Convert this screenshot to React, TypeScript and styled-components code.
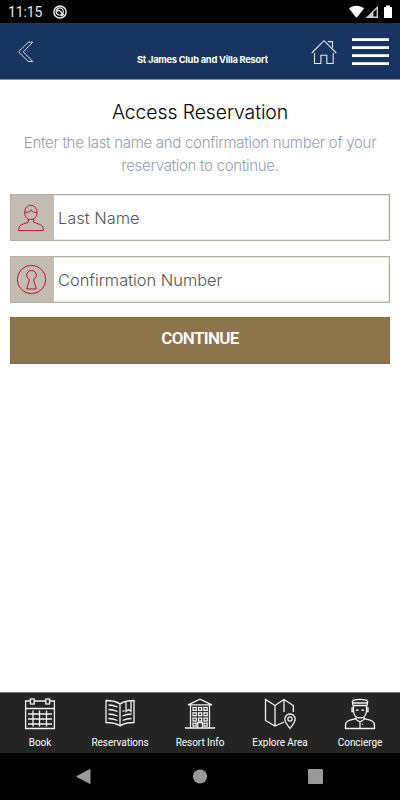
import React from "react";
import styled, { createGlobalStyle } from "styled-components";

const Global = createGlobalStyle`
  * { box-sizing: border-box; }
  body { margin: 0; background: #fff; font-family: Inter, "Open Sans", sans-serif; }
  svg { display: block; flex: none; overflow: visible; }
`;

const Screen = styled.div`
  width: 400px;
  height: 800px;
  display: flex;
  flex-direction: column;
  overflow: hidden;
  background: #fff;
`;

const StatusBar = styled.div`
  height: 23px;
  background: #000;
  display: flex;
  align-items: center;
  padding: 0 7px 0 8px;
`;

const Clock = styled.span`
  font: 400 14px/23px Roboto, sans-serif;
  letter-spacing: -0.1px;
  color: #e8e8e8;
  width: 45px;
  padding-top: 1px;
`;

const StatusIcons = styled.div`
  margin-left: auto;
`;

const Header = styled.header`
  height: 57px;
  background: #183561;
  border-bottom: 1px solid #8b98ac;
  display: grid;
  grid-template-columns: 52px 1fr 41px 37px;
  align-items: start;
  padding: 0 11px 0 17px;
`;

const HeaderTitle = styled.h1`
  margin: 0 0 0 68px;
  padding-top: 29px;
  font-size: 9.3px;
  line-height: 16px;
  font-weight: 700;
  letter-spacing: -0.25px;
  white-space: nowrap;
  color: #fff;
`;

const IconSlot = styled.div<{ $top: number }>`
  padding-top: ${(p) => p.$top}px;
`;

const MenuLines = styled.div`
  display: grid;
  gap: 5px;
  margin-top: 15px;
`;

const MenuLine = styled.span`
  height: 3px;
  background: linear-gradient(#d4d8df 0 1px, #fff 1px);
`;

const Main = styled.main`
  flex: 1;
  padding: 19px 10px 0;
`;

const Heading = styled.h2`
  margin: 0;
  text-align: center;
  font-size: 19.4px;
  line-height: 26px;
  font-weight: 300;
  letter-spacing: -0.08px;
  color: #000;
`;

const Intro = styled.p`
  margin: 6px 0 17px;
  text-align: center;
  font-size: 15px;
  line-height: 23px;
  font-weight: 300;
  letter-spacing: -0.29px;
  color: #94a0ae;
  white-space: nowrap;
`;

const Field = styled.label`
  display: flex;
  height: 47px;
  margin-bottom: 15px;
  border: 1px solid #b9ada0;
  box-shadow: inset 0 0 0 0.5px #d5cec5;
  background: #fff;

  & + & {
    margin-bottom: 14px;
  }
`;

const FieldIcon = styled.span`
  width: 43px;
  background: #c3bcb0;
  display: flex;
  align-items: center;
  justify-content: center;
`;

const FieldText = styled.span`
  padding-left: 4px;
  font-size: 16.4px;
  line-height: 46px;
  font-weight: 300;
  color: #555;
`;

const Submit = styled.button`
  display: block;
  width: 100%;
  height: 47px;
  padding: 0 0 5px;
  border: 1px solid #876b3a;
  background: #8d744a;
  color: #fff;
  font: 600 17px/20px Roboto, sans-serif;
  letter-spacing: -0.65px;
`;

const TabBar = styled.nav`
  height: 61px;
  background: #252525;
  border-top: 1px solid #777;
  display: grid;
  grid-template-columns: repeat(5, 80px);
`;

const Tab = styled.div`
  display: flex;
  flex-direction: column;
  align-items: center;
  padding-top: 5px;
  gap: 5px;
  font: 400 10px/16px Roboto, sans-serif;
  letter-spacing: -0.05px;
  color: #fff;
  white-space: nowrap;
`;

const SystemNav = styled.div`
  height: 47px;
  background: #000;
  display: flex;
  align-items: flex-start;
  justify-content: space-between;
  padding: 16px 77px 0 76px;
`;

const lineIcon = {
  width: 32,
  height: 32,
  viewBox: "0 0 32 32",
  fill: "none",
  stroke: "#f2f2f2",
  strokeWidth: 1.3,
} as const;

const CalendarIcon = () => (
  <svg {...lineIcon}>
    <path d="M6.4 3H1.6v27.5h28.8V3h-4.8M10.2 3h11.6M1.6 10.5h28.8" />
    <rect x="6.4" y="1" width="3.8" height="5" />
    <rect x="21.8" y="1" width="3.8" height="5" />
    <path d="M4 16h24M4 21h24M4 26h24M9 12.5V28.5M15.5 12.5V28.5M22.5 12.5V28.5" />
  </svg>
);

const BookIcon = () => (
  <svg {...lineIcon}>
    <path d="M16 6C12 3 7 2.5 2 2.5v22c5 0 10 .3 14 3.5 4-3.2 9-3.5 14-3.5v-22C25 2.5 20 3 16 6zV28" />
    <path d="M4.5 7c3 0 6 .7 9 2M4.5 11.5c3 0 6 .7 9 2M4.5 16c3 0 6 .7 9 2M4.5 20.5c3 0 6 .7 9 2M18.5 18c2.5-1.2 5.5-2 9-2M18.5 22.5c2.5-1.2 5.5-2 9-2M18.5 13.5l2-.8M22 3.5v10l2.5-2 2.5 2v-11" />
  </svg>
);

const HotelIcon = () => (
  <svg {...lineIcon}>
    <path d="M4 6.8L16 1.2l12 5.6M4 6.8h24M6.500 7v22.500M25.500 7v22.500M1 30h30" />
    {[9.5, 14.8, 20.1, 25.2].map((y, row) =>
      [9, 14.5, 20].map((x, col) =>
        row === 3 && col === 1 ? (
          <path key={`${x}-${y}`} d="M13.8 30v-5.5h4.6V30" />
        ) : (
          <rect key={`${x}-${y}`} x={x} y={y} width="3.2" height="2.9" />
        )
      )
    )}
  </svg>
);

const MapIcon = () => (
  <svg {...lineIcon}>
    <path d="M20 24l-9 4-9.5-5.5V1.5L11 7.5l9-6 9.3 6V14M11 7.5V28M20 1.5v12.5" />
    <path d="M26 30.5c-3-4.5-5.2-6.3-5.2-9.3a5.2 5.2 0 0 1 10.4 0c0 3-2.2 4.8-5.2 9.3z" />
    <circle cx="26" cy="21" r="2.1" />
  </svg>
);

const ConciergeIcon = () => (
  <svg {...lineIcon}>
    <path d="M9 7.5L8.3 3.5C10 .7 22 .7 23.7 3.5L23 7.5zM9 5h14" />
    <path d="M9.5 7.5v5c0 5 3 7.5 6.5 7.5s6.5-2.5 6.5-7.5v-5M9.5 10H8v3.5h1.5M22.5 10H24v3.5h-1.5M12 12.5q1.2-1 2.5 0M17.5 12.5q1.2-1 2.5 0" />
    <path d="M12 18.5v3l4 2.5 4-2.5v-3M12 20.5c-6 1.5-10.5 1.8-10.5 7v3h29v-3c0-5.2-4.5-5.5-10.5-7M16 24v6.5M18.5 25.8v1" />
  </svg>
);

const tabs = [
  { label: "Book", Icon: CalendarIcon },
  { label: "Reservations", Icon: BookIcon },
  { label: "Resort Info", Icon: HotelIcon },
  { label: "Explore Area", Icon: MapIcon },
  { label: "Concierge", Icon: ConciergeIcon },
];

export default function App() {
  return (
    <>
      <Global />
      <Screen>
        <StatusBar>
          <Clock>11:15</Clock>
          <svg width="14" height="14" viewBox="0 0 14 14" fill="none" stroke="#e8e8e8">
            <circle cx="7" cy="7" r="6.1" strokeWidth="1.5" />
            <circle cx="6.7" cy="6.5" r="3.6" strokeWidth="1.3" />
            <path d="M3.7 6.3c2-2 3.2-.9 6.5 3.3L8 11" strokeWidth="1.6" />
          </svg>
          <StatusIcons>
            <svg width="44" height="14" viewBox="0 0 44 14" fill="#fff">
              <path d="M0 3.6C4-.2 11-.2 15 3.6L7.5 13z" />
              <path d="M29 .8V13H16.5z" fill="#ccc" />
              <path d="M27.6 4v7.6h-3.2V7.3z" fill="#000" />
              <path d="M35 2h2V.5h4V2h2v11h-8z" />
            </svg>
          </StatusIcons>
        </StatusBar>
        <Header>
          <IconSlot $top={18}>
            <svg width="18" height="22" viewBox="0 0 18 22" fill="none" stroke="#d7dce5" strokeWidth="1">
              <path d="M1.5 10.8L11.3 1.2h4.5L6.2 10.8l9.6 9.7h-4.5z" />
            </svg>
          </IconSlot>
          <HeaderTitle>St James Club and Villa Resort</HeaderTitle>
          <IconSlot $top={16}>
            <svg width="26" height="26" viewBox="0 0 26 26" fill="none" stroke="#e2e5eb" strokeWidth="1.1">
              <path d="M.7 14L13 1.7 25.3 14M3.5 13.8v10.7h6.4v-8.2h5.9v8.2h6.4V13.8M16.7 2.6h4.8v6.2" />
            </svg>
          </IconSlot>
          <MenuLines>
            <MenuLine />
            <MenuLine />
            <MenuLine />
            <MenuLine />
          </MenuLines>
        </Header>
        <Main>
          <Heading>Access Reservation</Heading>
          <Intro>
            Enter the last name and confirmation number of your
            <br />
            reservation to continue.
          </Intro>
          <Field>
            <FieldIcon>
              <svg width="29" height="27" viewBox="0 0 29 27" fill="none" stroke="#c80f2e" strokeWidth="1">
                <path d="M6.7 8.500C6.700 4 9.200 1.300 12.800 1.300S19 4 19 8.500s-2.600 7-6.200 7-6.100-2.500-6.100-7zM7 8.200c2.400.4 4.500 0 6.300-2.200 1.200 2 2.500 2.600 5.500 2.400" />
                <path d="M10.300 15v3.200c-4 2-9.500 1.800-9.500 6.800v1.600h24.400V25c0-5-5.500-4.800-9.500-6.800V15" />
              </svg>
            </FieldIcon>
            <FieldText>Last Name</FieldText>
          </Field>
          <Field>
            <FieldIcon>
              <svg width="31" height="30" viewBox="0 0 31 30" fill="none" stroke="#c80f2e" strokeWidth="1">
                <circle cx="14.5" cy="14.5" r="14.2" />
                <path d="M12.4 14.5a4.8 4.8 0 1 1 4.2 0l2.6 9.4h-9.4z" />
              </svg>
            </FieldIcon>
            <FieldText>Confirmation Number</FieldText>
          </Field>
          <Submit>CONTINUE</Submit>
        </Main>
        <TabBar>
          {tabs.map(({ label, Icon }) => (
            <Tab key={label}>
              <Icon />
              {label}
            </Tab>
          ))}
        </TabBar>
        <SystemNav>
          <svg width="15" height="15" viewBox="0 0 15 15">
            <path d="M.7 7.5L14 .5v14z" fill="#999" stroke="#999" strokeLinejoin="round" />
          </svg>
          <svg width="15" height="15" viewBox="0 0 15 15">
            <circle cx="8" cy="7.5" r="7.1" fill="#999" />
          </svg>
          <svg width="15" height="15" viewBox="0 0 15 15">
            <rect width="15" height="15" rx="1" fill="#999" />
          </svg>
        </SystemNav>
      </Screen>
    </>
  );
}
